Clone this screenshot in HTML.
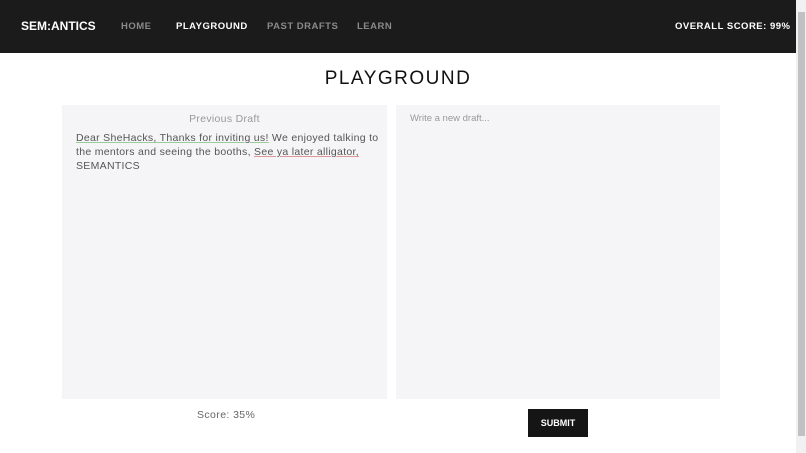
<!DOCTYPE html>
<html><head><style>
*{margin:0;padding:0;box-sizing:border-box}
body{width:806px;height:453px;overflow:hidden;background:#fff;font-family:"Liberation Sans",sans-serif;position:relative}
.hdr{position:absolute;left:0;top:0;width:796px;height:53px;background:#1b1b1b}
.hdr span{position:absolute;top:21px;font-size:9.5px;font-weight:bold;letter-spacing:.5px;color:#8a8a8a;white-space:nowrap}
.hdr .logo{left:21px;top:19px;font-size:12px;color:#fff;letter-spacing:0}
.sb{position:absolute;left:796px;top:0;width:10px;height:453px;background:#f1f1f1}
.th{position:absolute;left:798px;top:12px;width:7px;height:424px;background:#c1c1c1}
h1{position:absolute;left:0;width:796px;top:68px;text-align:center;font-weight:normal;font-size:19px;letter-spacing:1.5px;color:#111}
.box{position:absolute;top:105px;height:294px;background:#f5f5f7}
.pd{position:absolute;left:62px;width:325px;top:113px;text-align:center;font-size:10.5px;color:#999;letter-spacing:.3px}
.txt{position:absolute;left:76px;top:131px;width:320px;font-size:10.5px;line-height:14px;color:#555;letter-spacing:.3px;white-space:nowrap}
.g{text-decoration:underline;text-decoration-color:#9c9}
.r{text-decoration:underline;text-decoration-color:#d99}
.ph{position:absolute;left:410px;top:113px;font-size:9.5px;color:#999}
.sc{position:absolute;left:197px;top:409px;font-size:10.5px;color:#666;letter-spacing:.4px}
.btn{position:absolute;left:528px;top:409px;width:60px;height:28px;background:#151515;color:#fff;font-size:9px;font-weight:bold;text-align:center;line-height:28px}
</style></head><body>
<div class="hdr">
<span class="logo">SEM:ANTICS</span>
<span style="left:121px">HOME</span>
<span style="left:176px;color:#fff">PLAYGROUND</span>
<span style="left:267px">PAST DRAFTS</span>
<span style="left:357px">LEARN</span>
<span style="left:675px;color:#fff">OVERALL SCORE: 99%</span>
</div>
<div class="sb"></div><div class="th"></div>
<h1>PLAYGROUND</h1>
<div class="box" style="left:62px;width:325px"></div>
<div class="box" style="left:396px;width:324px"></div>
<div class="pd">Previous Draft</div>
<div class="txt"><span class="g">Dear SheHacks, Thanks for inviting us!</span> We enjoyed talking to<br>the mentors and seeing the booths, <span class="r">See ya later alligator,</span><br>SEMANTICS</div>
<div class="ph">Write a new draft...</div>
<div class="sc">Score: 35%</div>
<div class="btn">SUBMIT</div>
</body></html>
